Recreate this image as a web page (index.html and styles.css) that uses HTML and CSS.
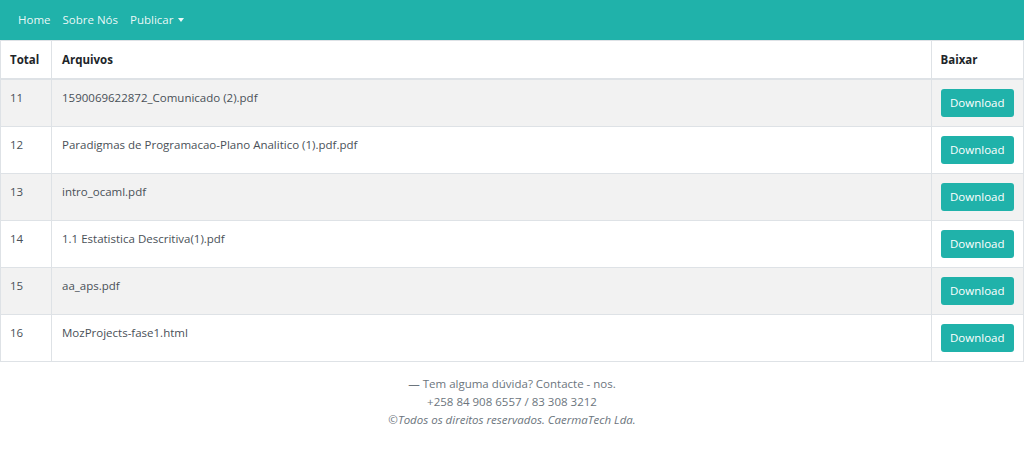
FILE: index.html
```html
<!DOCTYPE html>
<html lang="pt">
<head>
<meta charset="utf-8">
<title>Arquivos</title>
<link rel="stylesheet" href="styles.css">
</head>
<body>
<nav class="navbar">
  <a class="nav-link" href="#">Home</a>
  <a class="nav-link" href="#">Sobre Nós</a>
  <a class="nav-link dropdown" href="#">Publicar<span class="caret"></span></a>
</nav>
<table class="files">
  <thead>
    <tr><th class="c-total">Total</th><th>Arquivos</th><th class="c-dl">Baixar</th></tr>
  </thead>
  <tbody>
    <tr><td>11</td><td>1590069622872_Comunicado (2).pdf</td><td><a class="btn" href="#">Download</a></td></tr>
    <tr><td>12</td><td>Paradigmas de Programacao-Plano Analitico (1).pdf.pdf</td><td><a class="btn" href="#">Download</a></td></tr>
    <tr><td>13</td><td>intro_ocaml.pdf</td><td><a class="btn" href="#">Download</a></td></tr>
    <tr><td>14</td><td>1.1 Estatistica Descritiva(1).pdf</td><td><a class="btn" href="#">Download</a></td></tr>
    <tr><td>15</td><td>aa_aps.pdf</td><td><a class="btn" href="#">Download</a></td></tr>
    <tr><td>16</td><td>MozProjects-fase1.html</td><td><a class="btn" href="#">Download</a></td></tr>
  </tbody>
</table>
<footer class="footer">
  <p>— Tem alguma dúvida? Contacte - nos.</p>
  <p>+258 84 908 6557 / 83 308 3212</p>
  <p class="copy">©Todos os direitos reservados. CaermaTech Lda.</p>
</footer>
</body>
</html>
```
FILE: styles.css
```css
* { box-sizing: border-box; }
body {
  margin: 0;
  font-family: "Open Sans", "Noto Sans", sans-serif;
  font-size: 11.5px;
  line-height: 18px;
  color: #212529;
  background: #fff;
}
.navbar {
  background: #20b2aa;
  height: 40px;
  padding: 0 12px;
  display: flex;
  align-items: center;
}
.nav-link {
  color: rgba(255,255,255,0.92);
  text-decoration: none;
  padding: 6px 6px;
  font-size: 11.5px;
  display: flex;
  align-items: center;
}
.caret {
  display: inline-block;
  margin-left: 5px;
  width: 0;
  height: 0;
  border-top: 4px solid rgba(255,255,255,0.92);
  border-left: 3.5px solid transparent;
  border-right: 3.5px solid transparent;
}
.files {
  width: 100%;
  border-collapse: collapse;
  margin-bottom: 12px;
}
.files th, .files td {
  border: 1px solid #dee2e6;
  padding: 9px;
  text-align: left;
  vertical-align: top;
}
.files td:nth-child(2), .files th:nth-child(2) { padding-left: 10px; }
.files th {
  font-weight: 700;
  color: #212529;
  border-bottom: 2px solid #dee2e6;
  padding-top: 10px;
}
.files td { color: #495057; height: 47px; }
.files tbody tr:nth-child(odd) { background: #f2f2f2; }
.c-total { width: 51px; }
.c-dl { width: 91px; }
.btn {
  display: inline-block;
  background: #20b2aa;
  color: #fff;
  text-decoration: none;
  border-radius: 3px;
  padding: 5px 9.5px;
  line-height: 18px;
  font-size: 11.5px;
  white-space: nowrap;
}
.footer {
  text-align: center;
  color: #6c757d;
  font-size: 11.5px;
  padding-top: 1px;
}
.footer p { margin: 0; line-height: 18px; }
.copy { font-style: italic; }
```
